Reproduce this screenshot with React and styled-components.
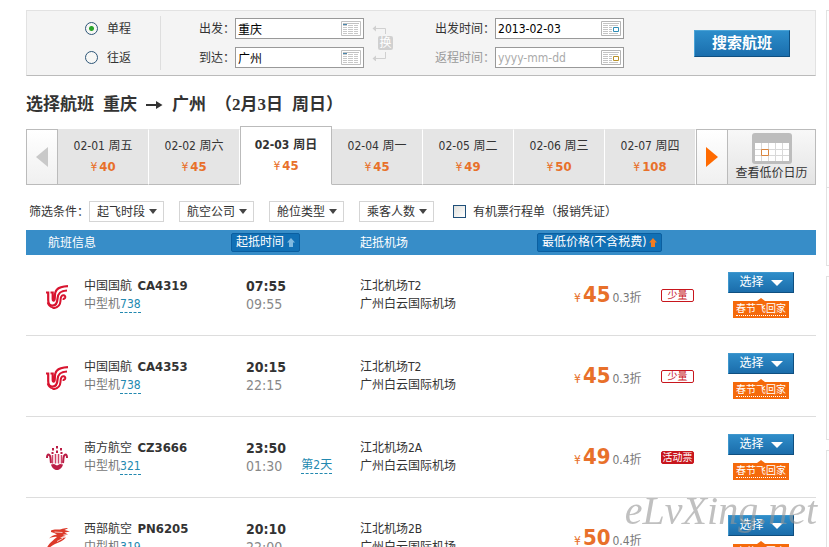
import { useState } from "react";
import styled, { createGlobalStyle } from "styled-components";

const DAYS = [
	{ date: "02-01 周五", price: 40 },
	{ date: "02-02 周六", price: 45 },
	{ date: "02-03 周日", price: 45 },
	{ date: "02-04 周一", price: 45 },
	{ date: "02-05 周二", price: 49 },
	{ date: "02-06 周三", price: 50 },
	{ date: "02-07 周四", price: 108 },
];

const FILTERS = ["起飞时段", "航空公司", "舱位类型", "乘客人数"];

const FLIGHTS = [
	{ logo: AirChinaLogo, airline: "中国国航", code: "CA4319", plane: "738", depart: "07:55", arrive: "09:55", from: "江北机场T2", price: 45, discount: "0.3折", tag: "少量" },
	{ logo: AirChinaLogo, airline: "中国国航", code: "CA4353", plane: "738", depart: "20:15", arrive: "22:15", from: "江北机场T2", price: 45, discount: "0.3折", tag: "少量" },
	{ logo: SouthernLogo, airline: "南方航空", code: "CZ3666", plane: "321", depart: "23:50", arrive: "01:30", nextDay: "第2天", from: "江北机场2A", price: 49, discount: "0.4折", tag: "活动票", solid: true },
	{ logo: WestAirLogo, airline: "西部航空", code: "PN6205", plane: "319", depart: "20:10", arrive: "22:00", from: "江北机场2B", price: 50, discount: "0.4折" },
];

function AirChinaLogo() {
	return (
		<svg width="22" height="28" viewBox="0 -4 22 28" fill="none" stroke="#d8142f">
			<path d="M0 7.500h2.200v7.500c0 3.600 1.200 5.600 4.300 5.600 3.800 0 4.800-3.200 5-7 .2-4.600 2-7.600 9.500-8.100" strokeWidth="2.200" />
			<path d="M4.500 7.500h2.200v6.700c0 1.700 1.500 2 1.900.3.700-3.500-.5-7 2.200-9.800C13 2.300 16 1.500 22 1.200" strokeWidth="2.200" />
			<path d="M6.500 23.200c5.500-.2 7.700-3 8-7.200.2-2.800 0-5.300 2.600-5.700 2-.2 2.700 1.600 1.800 2.900-.5.7-1.300.8-2.200.5" strokeWidth="2" />
			<path d="M1.500 17.500c.8 2.800 2.500 4.600 5.500 5" strokeWidth="1.500" />
		</svg>
	);
}

function SouthernLogo() {
	return (
		<svg width="22" height="26" viewBox="0 -2 22 26" fill="none" stroke="#cf4467">
			<path d="M6.500 17.500V9M9.500 17.500V8M12.500 17.500V8M15.500 17.500V9" strokeWidth="1.500" />
			<path d="M5 17c-.6-3 0-7.600-2-8.300C1.600 8.300 1 9.500 1 12M17 17c.6-3 0-7.600 2-8.300 1.400-.4 2 .8 2 3.300" stroke="#bb1d45" strokeWidth="2" />
			<g fill="#bb1d45" stroke="none">
				<path d="M10 0h2v2.500h-2zM6 2h2v2.500H6zM14 2h2v2.500h-2zM10 4.500h2V7h-2zM5.500 6h2v2h-2zM14.500 6h2v2h-2z" />
				<path d="M5 18.500l3-.5 3 1.500 3-1.500 3 .5c-.6 2.900-3 5.500-6 5.500s-5.400-2.600-6-5.500z" />
			</g>
		</svg>
	);
}

function WestAirLogo() {
	return (
		<svg width="24" height="24" viewBox="0 0 24 24" fill="#dc3a2a">
			<path d="M5 4.500C9 2.500 12 4 15 3.200c2.500-.6 5-1.700 7-1l-3.500 1.900L24 5.500l-5.500 1 3.500 2c-2 .2-4-.2-5.200.6l3.200 1c-2.500.2-4 .6-6 2l6-.6c-3 3.500-7 5-11 6.500-3 1.300-5.500 4-9 5.500 2.500-6 7-9 11-12.500-3-.6-5.500.5-8 1.500 2-2.500 5-3.200 8-4-2-1-3.500-2-6-2.500z" />
			<path d="M8.500 6l8 .5M11 15.500l6-3.300" stroke="#fff" strokeWidth=".7" />
		</svg>
	);
}

function ListIcon() {
	return (
		<svg width="20" height="15" viewBox="0 0 20 15" fill="none">
			<path d="M.5.500h19v14H.500z" stroke="#c2c2c2" fill="#fff" />
			<path d="M2 2.500h16" stroke="#c2c2c2" />
			<path d="M2 4.500h4M2 6.500h4M2 8.500h4M2 10.500h4M2 12.500h4M7 4.500h5M7 6.500h5M7 8.500h5M7 10.500h5M7 12.500h5M13 4.500h4M13 6.500h4M13 8.500h4M13 10.500h4M13 12.500h4" stroke="#c8c8c8" />
			<path d="M2 3.500h4" stroke="#4b87ad" />
		</svg>
	);
}

function DateIcon({ color }) {
	return (
		<svg width="20" height="15" viewBox="0 0 20 15" fill="none">
			<path d="M.5.500h19v14H.500z" stroke="#b5b5b5" fill="#fff" />
			<path d="M2 2.500h16M2 4.500h5M2 6.500h5M2 8.500h5M2 10.500h5M2 12.500h5M8 4.500h9M8 6.500h3M8 8.500h3M8 10.500h3M8 12.500h9" stroke="#c4c4c4" />
			<path d="M12.500 6.500h5v4h-5z" stroke={color} fill="#fff" />
		</svg>
	);
}

function SwapArrows() {
	return (
		<svg width="16" height="36" viewBox="0 0 16 36" fill="none" stroke="#d0d0d0">
			<path d="M1 3.500h12.500V9M13.500 27v6.500H1" />
			<path d="M4 .5l-3.500 3L4 6.500zM4 30.500l-3.500 3 3.500 3z" fill="#d0d0d0" stroke="none" />
		</svg>
	);
}

function Triangle({ left, color }) {
	return (
		<svg width="12" height="20" viewBox="0 0 12 20" fill={color}>
			<path d={left ? "M12 0v20L0 10z" : "M0 0v20l12-10z"} />
		</svg>
	);
}

function Caret({ width, height, color }) {
	return (
		<svg width={width} height={height} viewBox="0 0 10 6" preserveAspectRatio="none" fill={color}>
			<path d="M0 0h10L5 6z" />
		</svg>
	);
}

function SortArrow({ color }) {
	return (
		<svg width="8" height="9" viewBox="0 0 8 9" fill={color}>
			<path d="M4 0l4 4.500H6V9H2V4.500H0z" />
		</svg>
	);
}

function CalendarIcon() {
	return (
		<svg width="40" height="31" viewBox="0 0 40 31">
			<rect width="40" height="31" rx="3" fill="#bdbdbd" />
			<path d="M3 10h34v18H3z" fill="#fff" />
			<path d="M9.500 10v18M16.500 10v18M23.500 10v18M30.500 10v18M3 16.500h34M3 22.500h34" stroke="#d8d8d8" />
			<path d="M9.500 16.500h7v6h-7z" fill="#fff" stroke="#d9853f" />
		</svg>
	);
}

function SearchForm() {
	const [trip, setTrip] = useState("single");

	return (
		<SearchBox>
			<TripTypes>
				<RadioLabel>
					<Radio type="radio" name="trip" checked={trip === "single"} onChange={() => setTrip("single")} />
					单程
				</RadioLabel>
				<RadioLabel>
					<Radio type="radio" name="trip" checked={trip === "return"} onChange={() => setTrip("return")} />
					往返
				</RadioLabel>
			</TripTypes>
			<Cities>
				<Fields>
					<FieldRow>
						出发：
						<Field>
							<Input defaultValue="重庆" />
							<ListIcon />
						</Field>
					</FieldRow>
					<FieldRow>
						到达：
						<Field>
							<Input defaultValue="广州" />
							<ListIcon />
						</Field>
					</FieldRow>
				</Fields>
				<Swap>
					<SwapArrows />
					<SwapButton type="button">换</SwapButton>
				</Swap>
			</Cities>
			<Fields>
				<FieldRow>
					出发时间：
					<Field>
						<Input defaultValue="2013-02-03" />
						<DateIcon color="#2f8db5" />
					</Field>
				</FieldRow>
				<FieldRow $muted>
					返程时间：
					<Field>
						<Input placeholder="yyyy-mm-dd" />
						<DateIcon color="#b8912a" />
					</Field>
				</FieldRow>
			</Fields>
			<SearchButton type="submit">搜索航班</SearchButton>
		</SearchBox>
	);
}

function DateStrip() {
	const [active, setActive] = useState(2);

	return (
		<Strip>
			<StepButton type="button" aria-label="前一周">
				<Triangle left color="#c9c9c9" />
			</StepButton>
			{DAYS.map((day, i) => (
				<Day key={day.date} type="button" $active={i === active} onClick={() => setActive(i)}>
					<span>{day.date}</span>
					<DayPrice>
						<Yen>¥</Yen>
						{day.price}
					</DayPrice>
				</Day>
			))}
			<StepButton type="button" aria-label="后一周">
				<Triangle color="#ff6a00" />
			</StepButton>
			<CalendarButton type="button">
				<CalendarIcon />
				查看低价日历
			</CalendarButton>
		</Strip>
	);
}

function Filters() {
	return (
		<FilterBar>
			<FilterTitle>筛选条件：</FilterTitle>
			<FilterList>
				{FILTERS.map((name) => (
					<SelectWrap key={name}>
						<Select aria-label={name}>
							<option>{name}</option>
						</Select>
						<Caret width="8" height="5" color="#444" />
					</SelectWrap>
				))}
			</FilterList>
			<CheckLabel>
				<Checkbox type="checkbox" />
				有机票行程单（报销凭证）
			</CheckLabel>
		</FilterBar>
	);
}

function FlightRow({ flight }) {
	const Logo = flight.logo;

	return (
		<tr>
			<Cell>
				<Carrier>
					<LogoBox>
						<Logo />
					</LogoBox>
					<div>
						<Line>
							{flight.airline} <Code>{flight.code}</Code>
						</Line>
						<Line $muted>
							中型机<Dashed href="#plane">{flight.plane}</Dashed>
						</Line>
					</div>
				</Carrier>
			</Cell>
			<Cell $indent={15}>
				<Time $bold>{flight.depart}</Time>
				<Time>
					{flight.arrive}
					{flight.nextDay && <Dashed href="#day">{flight.nextDay}</Dashed>}
				</Time>
			</Cell>
			<Cell>
				<Line>{flight.from}</Line>
				<Line>广州白云国际机场</Line>
			</Cell>
			<Cell $indent={37}>
				<Price>
					<Yen>¥</Yen>
					<Amount>{flight.price}</Amount>
					<Discount>{flight.discount}</Discount>
				</Price>
			</Cell>
			<Cell>{flight.tag && <Tag $solid={flight.solid}>{flight.tag}</Tag>}</Cell>
			<Cell>
				<Actions>
					<ChooseButton type="button">
						选择
						<Caret width="12" height="6" color="#fff" />
					</ChooseButton>
					<Promo href="#promo">
						<span>春节飞回家</span>
					</Promo>
				</Actions>
			</Cell>
		</tr>
	);
}

function FlightTable() {
	return (
		<Table>
			<colgroup>
				<Col $width={205} />
				<Col $width={129} />
				<col />
				<Col $width={124} />
				<Col $width={67} />
				<Col $width={88} />
			</colgroup>
			<thead>
				<tr>
					<HeadCell $indent={22}>航班信息</HeadCell>
					<HeadCell>
						<SortButton type="button">
							起抵时间
							<SortArrow color="#7fb9e0" />
						</SortButton>
					</HeadCell>
					<HeadCell>起抵机场</HeadCell>
					<HeadCell colSpan="2">
						<SortButton type="button">
							最低价格(不含税费)
							<SortArrow color="#f07c22" />
						</SortButton>
					</HeadCell>
					<HeadCell />
				</tr>
			</thead>
			<tbody>
				{FLIGHTS.map((flight) => (
					<FlightRow key={flight.code} flight={flight} />
				))}
			</tbody>
		</Table>
	);
}

function App() {
	return (
		<>
			<GlobalStyle />
			<Page>
				<Main>
					<SearchForm />
					<Heading>
						<span>选择航班</span>
						<span>重庆</span>
						<svg width="17" height="8" viewBox="0 0 17 8" fill="#333">
							<path d="M0 3h10V0l6.500 4L10 8V5H0z" />
						</svg>
						<span>广州</span>
						<span>（2月3日</span>
						<span>周日）</span>
					</Heading>
					<DateStrip />
					<Filters />
					<FlightTable />
				</Main>
				<Side>
					<Panel $height={256}>
						<PanelTop />
					</Panel>
					<Panel $height={164} />
					<Panel $height={128} />
				</Side>
				<Watermark>eLvXing.net</Watermark>
			</Page>
		</>
	);
}

const GlobalStyle = createGlobalStyle`
	* {
		box-sizing: border-box;
	}

	body {
		margin: 0;
		background: #fff;
		color: #333;
		font: 12px/18px "DejaVu Sans Condensed", "Noto Sans CJK SC", sans-serif;
		overflow-x: hidden;
	}

	button,
	input,
	select {
		font: inherit;
		color: inherit;
	}

	button {
		cursor: pointer;
	}

	svg {
		display: block;
		flex: none;
	}
`;

const Page = styled.div`
	display: grid;
	grid-template-columns: minmax(0, 1fr) 3px;
	gap: 10px;
	padding: 10px 0 0 26px;
`;

const Main = styled.main`
	min-width: 0;
`;

const SearchBox = styled.form`
	display: flex;
	align-items: center;
	height: 66px;
	padding-right: 25px;
	background: #f4f4f4;
	border: 1px solid #e2e2e2;
	border-bottom-color: #bbb;
`;

const TripTypes = styled.div`
	display: flex;
	flex-direction: column;
	justify-content: center;
	gap: 11px;
	width: 134px;
	height: 54px;
	padding-left: 58px;
	border-right: 1px solid #dedede;
`;

const RadioLabel = styled.label`
	display: flex;
	align-items: center;
	gap: 9px;
	height: 18px;
`;

const Radio = styled.input`
	appearance: none;
	width: 13px;
	height: 13px;
	margin: 0;
	border: 1px solid #2d5577;
	border-radius: 50%;
	background: #f7f7f5;

	&:checked {
		background: radial-gradient(circle, #2aa52a 0 2px, #f7f7f5 3px);
	}
`;

const Cities = styled.div`
	display: flex;
	align-items: center;
	gap: 8px;
	margin-left: 38px;
	margin-right: 42px;
`;

const Fields = styled.div`
	display: flex;
	flex-direction: column;
	gap: 8px;
`;

const FieldRow = styled.label`
	display: flex;
	align-items: center;
	white-space: nowrap;
	color: ${(props) => (props.$muted ? "#999" : "#333")};
`;

const Field = styled.span`
	display: flex;
	align-items: center;
	width: 129px;
	height: 21px;
	padding-right: 2px;
	background: #fff;
	border: 1px solid #999;
`;

const Input = styled.input`
	flex: 1;
	min-width: 0;
	height: 19px;
	padding: 0 2px;
	border: 0;
	outline: 0;
	background: transparent;
	color: #000;

	&::placeholder {
		color: #aaa;
		opacity: 1;
	}
`;

const Swap = styled.div`
	position: relative;
	width: 21px;
`;

const SwapButton = styled.button`
	position: absolute;
	top: 11px;
	right: 0;
	width: 15px;
	height: 14px;
	padding: 0;
	border: 0;
	border-radius: 2px;
	background: #d0d0d0;
	color: #fff;
	line-height: 14px;
`;

const SearchButton = styled.button`
	width: 96px;
	height: 27px;
	margin-left: auto;
	padding: 0;
	border: 1px solid #1c6fa8;
	border-color: #4ba3d6 #0f4f80 #0f4f80 #4ba3d6;
	background: linear-gradient(#2d8dca, #1a6ead);
	color: #fff;
	font-size: 15px;
	font-weight: 700;
`;

const Heading = styled.h1`
	display: flex;
	align-items: center;
	gap: 9px;
	margin: 16px 0 9px;
	font: 700 17px/25px "Liberation Serif", "Noto Sans CJK SC", serif;
	white-space: nowrap;
`;

const Strip = styled.div`
	display: flex;
	align-items: flex-end;
	height: 59px;
`;

const StepButton = styled.button`
	display: flex;
	align-items: center;
	justify-content: center;
	width: 32px;
	height: 56px;
	padding: 0;
	border: 1px solid #bbb;
	background: linear-gradient(#fff, #f0f0f0);
`;

const Day = styled.button`
	display: flex;
	flex: 1;
	flex-direction: column;
	align-items: center;
	justify-content: center;
	gap: 3px;
	min-width: 0;
	height: ${(props) => (props.$active ? "59px" : "56px")};
	padding: 0 0 1px;
	border: 1px solid ${(props) => (props.$active ? "#bbb" : "#fff")};
	border-bottom-color: ${(props) => (props.$active ? "#fff" : "#bbb")};
	border-top-color: ${(props) => (props.$active ? "#bbb" : "#e5e5e5")};
	border-left-width: ${(props) => (props.$active ? "1px" : "0")};
	background: ${(props) => (props.$active ? "#fff" : "#e5e5e5")};
	font-weight: ${(props) => (props.$active ? 700 : 400)};
	white-space: nowrap;
`;

const DayPrice = styled.span`
	color: #e8702a;
	font-size: 13px;
	font-weight: 700;
`;

const Yen = styled.span`
	margin-right: 2px;
	color: #e8702a;
	font-size: 12px;
	font-weight: 400;
`;

const CalendarButton = styled.button`
	display: flex;
	flex-direction: column;
	align-items: center;
	justify-content: flex-end;
	width: 88px;
	height: 56px;
	padding: 0 0 2px;
	border: 1px solid #bbb;
	border-left: 0;
	background: linear-gradient(#f8f8f8, #e4e4e4);
	white-space: nowrap;
`;

const FilterBar = styled.div`
	display: flex;
	align-items: center;
	height: 21px;
	margin: 16px 0 8px;
	padding-left: 3px;
	white-space: nowrap;
`;

const FilterTitle = styled.span`
	width: 60px;
`;

const FilterList = styled.div`
	display: flex;
	gap: 15px;
	margin-right: 19px;
`;

const SelectWrap = styled.span`
	position: relative;

	svg {
		position: absolute;
		top: 8px;
		right: 7px;
		pointer-events: none;
	}
`;

const Select = styled.select`
	appearance: none;
	display: block;
	width: 75px;
	height: 21px;
	padding: 0 0 0 7px;
	border: 1px solid #d5d5d5;
	border-radius: 0;
	background: #fff;
`;

const CheckLabel = styled.label`
	display: flex;
	align-items: center;
	gap: 7px;
`;

const Checkbox = styled.input`
	appearance: none;
	width: 13px;
	height: 13px;
	margin: 0;
	border: 1px solid #1f4f79;
	background: linear-gradient(135deg, #e0e0dc, #fff);
`;

const Table = styled.table`
	width: 100%;
	table-layout: fixed;
	border-spacing: 0;
`;

const Col = styled.col`
	width: ${(props) => props.$width}px;
`;

const HeadCell = styled.th`
	height: 25px;
	padding: 0 0 0 ${(props) => props.$indent || 0}px;
	background: #378dc8;
	color: #fff;
	font-weight: 400;
	text-align: left;
	white-space: nowrap;
`;

const SortButton = styled.button`
	display: flex;
	align-items: center;
	gap: 3px;
	height: 19px;
	padding: 0 4px;
	border: 1px solid #0b5fa0;
	border-radius: 2px;
	background: #1170b5;
	line-height: 17px;
`;

const Cell = styled.td`
	height: 81px;
	padding: 0 0 0 ${(props) => props.$indent || 0}px;
	border-bottom: 1px solid #ddd;
	white-space: nowrap;
`;

const Carrier = styled.div`
	display: flex;
	align-items: center;
	gap: 14px;
	padding-left: 20px;
`;

const LogoBox = styled.div`
	width: 24px;
`;

const Line = styled.div`
	line-height: 18px;
	color: ${(props) => (props.$muted ? "#777" : "#333")};
`;

const Code = styled.b`
	margin-left: 2px;
	font-size: 13px;
`;

const Dashed = styled.a`
	display: inline-block;
	border-bottom: 1px dashed #2389b0;
	color: #2389b0;
	font-size: 12px;
	line-height: 15px;
	text-decoration: none;
`;

const Time = styled.div`
	display: flex;
	align-items: center;
	gap: 19px;
	height: 18px;
	color: ${(props) => (props.$bold ? "#333" : "#888")};
	font-size: 14px;
	font-weight: ${(props) => (props.$bold ? 700 : 400)};
`;

const Price = styled.div`
	display: flex;
	align-items: baseline;
`;

const Amount = styled.b`
	color: #e8702a;
	font-size: 22px;
	line-height: 24px;
`;

const Discount = styled.span`
	margin-left: 2px;
	color: #777;
`;

const Tag = styled.span`
	display: block;
	width: 33px;
	height: 13px;
	border: 1px solid #c8161d;
	border-radius: 2px;
	background: ${(props) => (props.$solid ? "#c8161d" : "#fff")};
	color: ${(props) => (props.$solid ? "#fff" : "#c8161d")};
	font-size: 10px;
	line-height: 11px;
	text-align: center;
`;

const Actions = styled.div`
	display: flex;
	flex-direction: column;
	align-items: center;
	gap: 8px;
	width: 66px;
`;

const ChooseButton = styled.button`
	display: flex;
	align-items: center;
	justify-content: center;
	gap: 7px;
	width: 66px;
	height: 21px;
	padding: 0;
	border: 1px solid;
	border-color: #3f97cd #0f4f80 #0f4f80 #3f97cd;
	background: linear-gradient(#2f8dc9, #1b6dab);
	color: #fff;
	line-height: 19px;
`;

const Promo = styled.a`
	position: relative;
	display: block;
	padding: 1px 3px 2px;
	background: #f56a0b;
	color: #fff;
	font-size: 10px;
	line-height: 13px;
	text-decoration: none;

	&::before {
		content: "";
		position: absolute;
		top: -3px;
		left: 24px;
		border: solid transparent;
		border-width: 0 4px 3px;
		border-bottom-color: #f56a0b;
	}

	span {
		display: block;
		border-bottom: 1px dotted #fff;
	}
`;

const Side = styled.aside`
	display: flex;
	flex-direction: column;
	gap: 10px;
`;

const Panel = styled.section`
	height: ${(props) => props.$height}px;
	border: 1px solid #e2e2e2;
	border-right: 0;
`;

const PanelTop = styled.div`
	height: 177px;
	border-bottom: 1px solid #e2e2e2;
`;

const Watermark = styled.div`
	position: fixed;
	right: 12px;
	bottom: 14px;
	color: rgba(150, 150, 150, 0.6);
	font: italic 40px/44px "Liberation Serif", serif;
	pointer-events: none;
`;

export default App;
